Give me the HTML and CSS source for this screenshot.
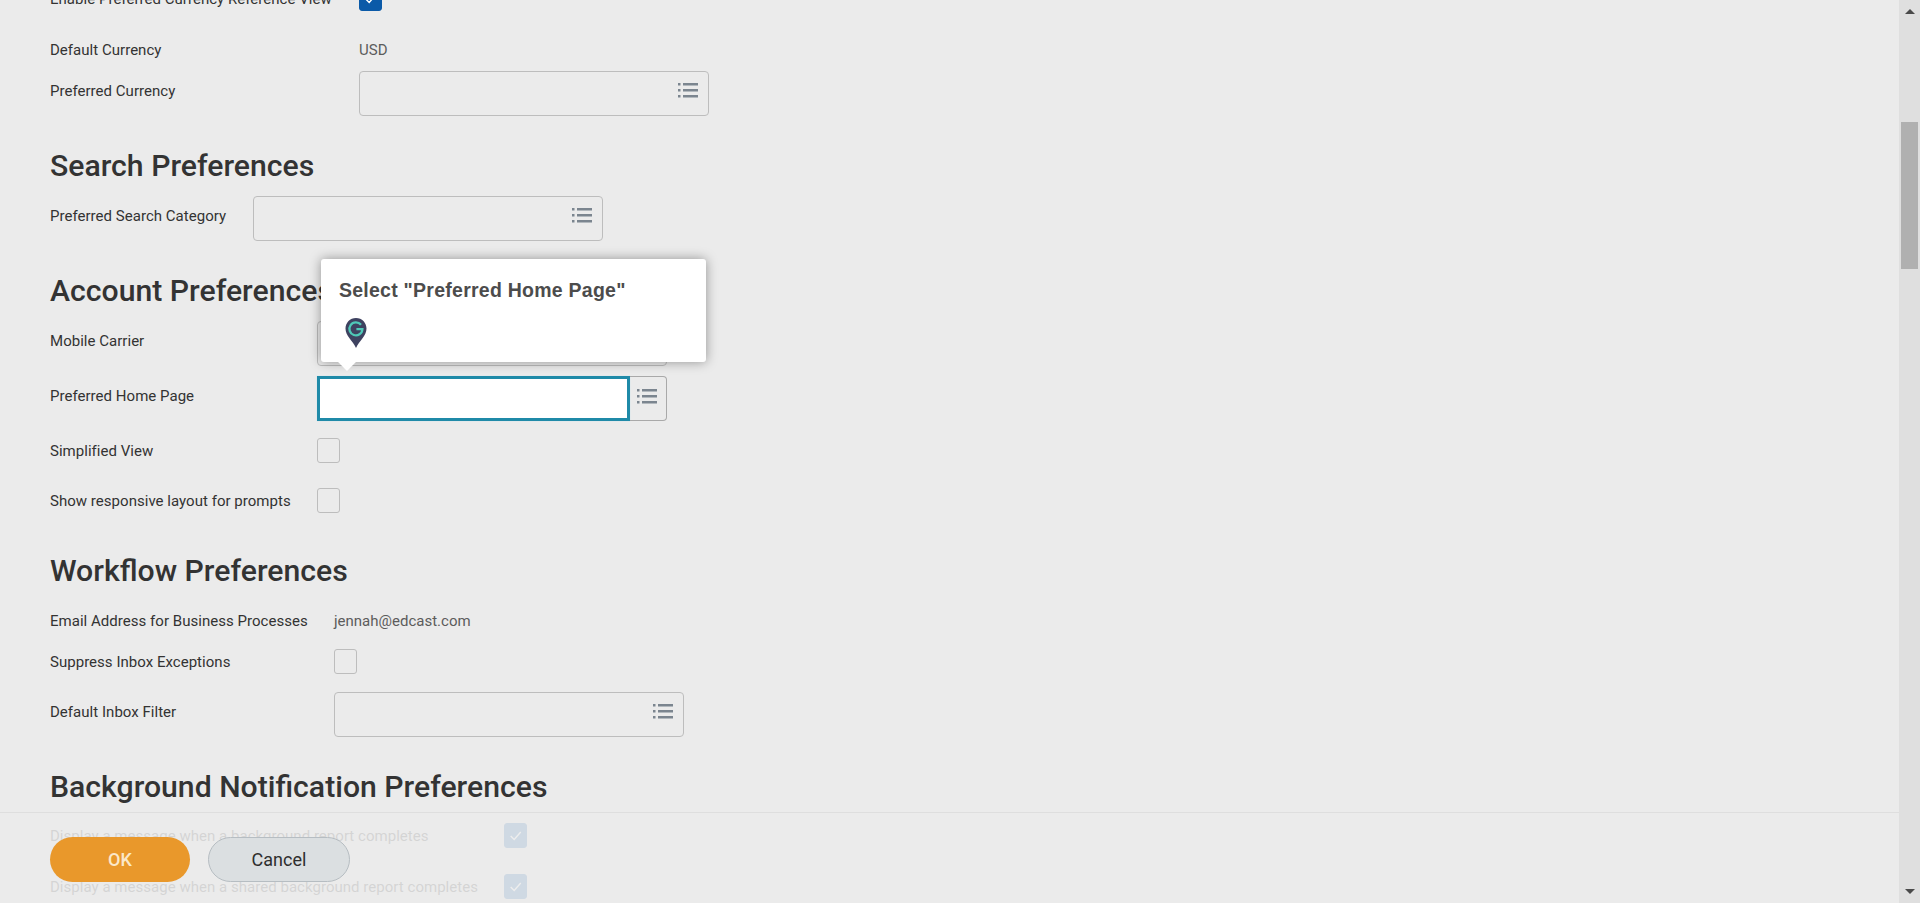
FILE: index.html
```html
<!DOCTYPE html>
<html lang="en">
<head>
<meta charset="utf-8">
<title>Change Preferences</title>
<link rel="stylesheet" href="styles.css">
</head>
<body>
<svg class="defs" aria-hidden="true">
  <symbol id="list" viewBox="0 0 20 17">
    <rect x="0" y="1" width="2.5" height="2.5"/><rect x="5" y="1" width="15" height="2.5"/>
    <rect x="0" y="7" width="2.5" height="2.5"/><rect x="5" y="7" width="15" height="2.5"/>
    <rect x="0" y="13" width="2.5" height="2.5"/><rect x="5" y="13" width="15" height="2.5"/>
  </symbol>
  <symbol id="check" viewBox="0 0 24 24">
    <path d="M6.5 12.5l4 4 7.5-8.5" fill="none" stroke="#fff" stroke-width="1.6"/>
  </symbol>
</svg>
<div class="page">
  <main class="main">
    <section class="section sec-currency">
      <div class="row center"><span class="label">Enable Preferred Currency Reference View</span><span class="box checked"><svg class="tick"><use href="#check"/></svg></span></div>
      <div class="row mt-29"><span class="label">Default Currency</span><span class="value">USD</span></div>
      <div class="row mt-11"><span class="label input-label">Preferred Currency</span><div class="input"><svg class="list"><use href="#list"/></svg></div></div>
    </section>

    <h2 class="heading">Search Preferences</h2>
    <section class="section sec-search">
      <div class="row"><span class="label input-label">Preferred Search Category</span><div class="input"><svg class="list"><use href="#list"/></svg></div></div>
    </section>

    <h2 class="heading">Account Preferences</h2>
    <section class="section sec-account">
      <div class="row"><span class="label input-label">Mobile Carrier</span><div class="input"><svg class="list"><use href="#list"/></svg></div></div>
      <div class="row mt-10"><span class="label input-label">Preferred Home Page</span>
        <div class="combo"><div class="combo-field"></div><div class="combo-btn"><svg class="list"><use href="#list"/></svg></div></div>
      </div>
      <div class="row center mt-17"><span class="label">Simplified View</span><span class="box"></span></div>
      <div class="row center mt-25"><span class="label">Show responsive layout for prompts</span><span class="box"></span></div>
    </section>

    <h2 class="heading heading-wide">Workflow Preferences</h2>
    <section class="section sec-workflow">
      <div class="row"><span class="label">Email Address for Business Processes</span><span class="value">jennah@edcast.com</span></div>
      <div class="row center mt-18"><span class="label">Suppress Inbox Exceptions</span><span class="box"></span></div>
      <div class="row mt-18"><span class="label input-label">Default Inbox Filter</span><div class="input"><svg class="list"><use href="#list"/></svg></div></div>
    </section>

    <h2 class="heading">Background Notification Preferences</h2>
    <section class="section sec-background">
      <div class="row center"><span class="label">Display a message when a background report completes</span><span class="box checked"><svg class="tick"><use href="#check"/></svg></span></div>
      <div class="row center mt-26"><span class="label">Display a message when a shared background report completes</span><span class="box checked"><svg class="tick"><use href="#check"/></svg></span></div>
    </section>

    <div class="popover">
      <div class="popover-title">Select "Preferred Home Page"</div>
      <svg class="pin" viewBox="0 0 24 32">
        <path d="M12 1C6 1 1.500 5.800 1.500 11.600c0 3.600 1.600 6.400 3.800 9.400 2.400 3.200 5 6.200 6.700 10 1.700-3.800 4.300-6.800 6.700-10 2.200-3 3.800-5.800 3.800-9.400C22.500 5.800 18 1 12 1z" fill="#3e4260"/>
        <path d="M17 7.800A6.500 6.500 0 1 0 18.400 12.200H12.400" fill="none" stroke="#4fc9b8" stroke-width="2.300"/>
      </svg>
    </div>

    <footer class="footer">
      <button class="btn btn-ok" type="button">OK</button>
      <button class="btn btn-cancel" type="button">Cancel</button>
    </footer>
  </main>
  <aside class="scrollbar">
    <span class="arrow arrow-up"></span>
    <span class="track"><span class="thumb"></span></span>
    <span class="arrow arrow-down"></span>
  </aside>
</div>
</body>
</html>
```
FILE: styles.css
```css
* { box-sizing: border-box; }
html, body { margin: 0; height: 903px; overflow: hidden; }
body { font-family: Roboto, "Liberation Sans", sans-serif; color: #333; background: #ebebeb; }
.defs { display: none; }

.page { display: flex; height: 903px; }
.main { position: relative; flex: 1; min-width: 0; overflow: hidden; padding: 0 0 0 50px; background: #ebebeb; }

.section { display: flex; flex-direction: column; }
.sec-currency { --label: 309px; margin-top: -14px; }
.sec-search { --label: 203px; }
.sec-account { --label: 267px; }
.sec-workflow { --label: 284px; }
.sec-background { --label: 454px; margin-top: 19px; }

.heading { margin: 33px 0 13px; font-size: 30.2px; line-height: 34px; font-weight: 500; color: #333; }
.heading-wide { margin: 41px 0 23px; }

.row { display: flex; align-items: flex-start; }
.row.center { align-items: center; }
.mt-10 { margin-top: 10px; }
.mt-11 { margin-top: 11px; }
.mt-17 { margin-top: 17px; }
.mt-18 { margin-top: 18px; }
.mt-25 { margin-top: 25px; }
.mt-26 { margin-top: 26px; }
.mt-29 { margin-top: 29px; }

.label { flex: none; width: var(--label); font-size: 15px; letter-spacing: .03px; line-height: 20px; color: #333; }
.input-label { padding-top: 10px; }
.value { font-size: 15px; line-height: 20px; color: #5c5c5c; }

.input { position: relative; flex: none; width: 350px; height: 45px; border: 1px solid #bdbdbd; border-radius: 4px; }
.list { display: block; width: 20px; height: 17px; fill: #7b858f; }
.input .list { position: absolute; top: 10px; right: 10px; }

.combo { flex: none; display: flex; width: 350px; height: 45px; }
.combo-field { flex: 1; background: #fff; border: 3px solid #1f8aa8; box-shadow: 0 0 1px #bfe0ea; }
.combo-btn { flex: none; width: 37px; border: 1px solid #a9a9a9; border-left: 0; border-radius: 0 4px 4px 0; padding: 11px 0 0 7px; }

.box { flex: none; display: block; width: 23px; height: 25px; border: 1px solid #bdbdbd; border-radius: 3px; }
.box.checked { background: #0b5aa8; border-color: #0b5aa8; }
.tick { display: block; width: 21px; height: 23px; }

.popover { position: absolute; left: 321px; top: 259px; width: 385px; height: 103px; padding: 20px 18px; background: #fff; border-radius: 3px; box-shadow: 0 0 12px rgba(0,0,0,.38); }
.popover::after { content: ""; position: absolute; left: 19px; bottom: -6px; width: 14px; height: 14px; background: #fff; transform: rotate(45deg); }
.popover-title { font-family: "Liberation Sans", Arial, sans-serif; font-weight: 700; font-size: 19.5px; letter-spacing: .25px; line-height: 23px; color: #4c4c4c; }
.pin { display: block; position: absolute; left: 23px; top: 58px; width: 24px; height: 32px; }

.footer { position: absolute; left: 0; right: 0; top: 812px; height: 91px; display: flex; align-items: flex-start; gap: 18px; padding: 24px 0 0 50px; background: rgba(235,235,235,.88); border-top: 1px solid #dedede; }
.btn { font-family: Roboto, sans-serif; font-size: 18px; font-weight: 500; height: 45px; width: 140px; border-radius: 23px; }
.btn-ok { background: #e9982b; border: 0; color: #fbe8c9; }
.btn-cancel { background: #dbdfe1; border: 1px solid #b6bdc2; color: #2e2e2e; font-weight: 400; width: 142px; }

.scrollbar { flex: none; width: 21px; display: flex; flex-direction: column; align-items: center; background: #dfdfdf; }
.arrow { flex: none; width: 0; height: 0; border-left: 5px solid transparent; border-right: 5px solid transparent; }
.arrow-up { margin-top: 9px; border-bottom: 5px solid #4a4a4a; }
.arrow-down { margin-bottom: 9px; border-top: 5px solid #4a4a4a; }
.track { flex: 1; width: 100%; padding: 108px 2px 0; }
.thumb { display: block; height: 147px; background: #b0b0b0; }
```
